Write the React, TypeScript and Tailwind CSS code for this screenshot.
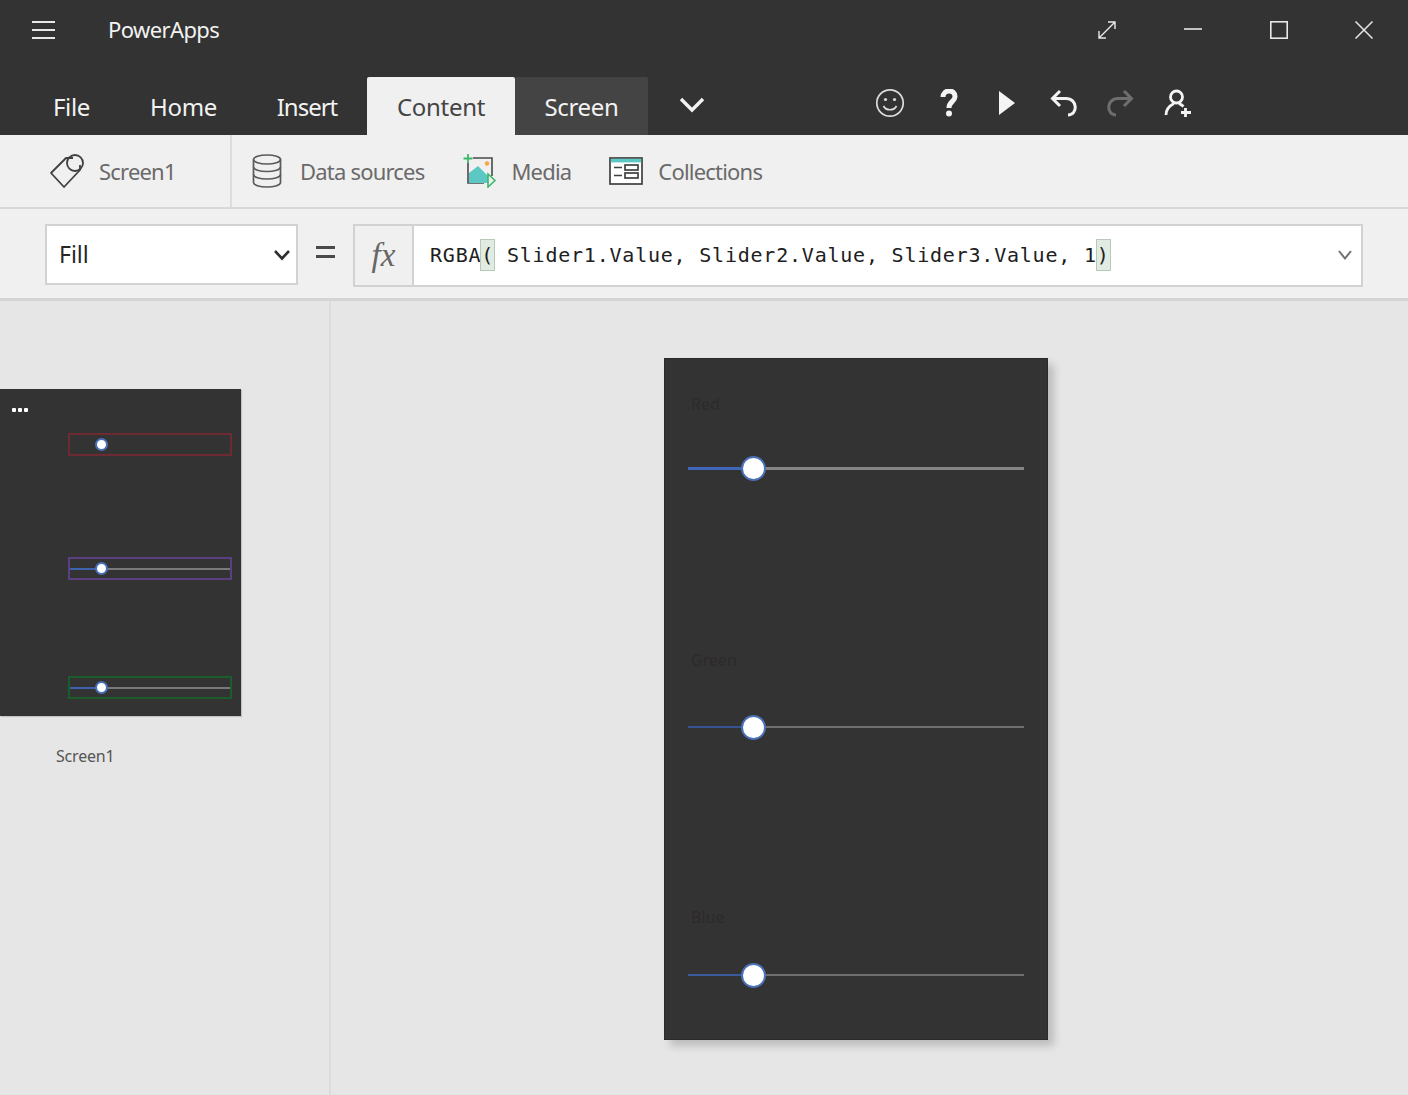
import React from 'react';

const uiFont = 'font-["Noto_Sans","Open_Sans",sans-serif]';

const tabs = [
  { label: 'File', width: 'w-[97px]', style: 'text-[#f2f2f2] tracking-[-0.3px]' },
  { label: 'Home', width: 'w-[127px]', style: 'text-[#f2f2f2] tracking-[-0.3px]' },
  { label: 'Insert', width: 'w-[120px]', style: 'text-[#f2f2f2] tracking-[-1px]' },
  { label: 'Content', width: 'w-[148px]', style: 'bg-[#f0f0f0] text-[#444444] rounded-t-[2px] tracking-[-0.3px]' },
  { label: 'Screen', width: 'w-[133px]', style: 'bg-[#444444] text-[#f2f2f2] rounded-t-[2px] tracking-[-0.3px]' },
];

function WindowControls() {
  return (
    <div className="ml-auto flex items-center text-[#e8e8e8]">
      <svg width="20" height="20" viewBox="0 0 20 20" fill="none" stroke="currentColor" strokeWidth="1.4" className="mr-[66px]">
        <path d="M2 18 L18 2 M11 2 H18 V9 M2 11 V18 H9" />
      </svg>
      <svg width="20" height="20" viewBox="0 0 20 20" fill="none" stroke="currentColor" strokeWidth="1.6" className="mr-[66px]">
        <path d="M1 9 H19" />
      </svg>
      <svg width="20" height="20" viewBox="0 0 20 20" fill="none" stroke="currentColor" strokeWidth="1.6" className="mr-[65px]">
        <rect x="1.8" y="1.8" width="16.4" height="16.4" />
      </svg>
      <svg width="20" height="20" viewBox="0 0 20 20" fill="none" stroke="currentColor" strokeWidth="1.5" className="mr-[34px]">
        <path d="M1.5 1.5 L18.5 18.5 M18.5 1.5 L1.5 18.5" />
      </svg>
    </div>
  );
}

function ActionIcons() {
  return (
    <div className="ml-[170px] flex items-center mt-[-6px] text-[#f4f4f4]">
      <svg width="30" height="30" viewBox="0 0 30 30" fill="none" stroke="currentColor" strokeWidth="1.7" className="text-[#dddddd]">
        <circle cx="15" cy="15" r="13.2" />
        <circle cx="10.5" cy="11.5" r="1.6" fill="currentColor" stroke="none" />
        <circle cx="19.5" cy="11.5" r="1.6" fill="currentColor" stroke="none" />
        <path d="M8.5 18 C11 23 19 23 21.5 18" />
      </svg>
      <svg width="18" height="28" viewBox="0 0 18 28" fill="none" stroke="currentColor" strokeWidth="5" className="ml-[35px]">
        <path d="M3 8 C3 0 15 0 15 7.5 C15 12.5 9 12.5 9 19" />
        <circle cx="9" cy="24.5" r="3" fill="currentColor" stroke="none" />
      </svg>
      <svg width="18" height="26" viewBox="0 0 18 26" fill="currentColor" className="ml-[40px]">
        <path d="M1 1 L17 13 L1 25 Z" />
      </svg>
      <svg width="28" height="28" viewBox="0 0 28 28" fill="none" stroke="currentColor" strokeWidth="3" className="ml-[34px]">
        <path d="M10 2 L2.5 9.5 L10 17 M3 9.5 H16 C28 9.5 28 26 18 26" />
      </svg>
      <svg width="28" height="28" viewBox="0 0 28 28" fill="none" stroke="currentColor" strokeWidth="3" className="ml-[28px] text-[#6e6e6e]">
        <path d="M18 2 L25.5 9.5 L18 17 M25 9.5 H12 C0 9.5 0 26 10 26" />
      </svg>
      <svg width="28" height="28" viewBox="0 0 28 28" fill="none" stroke="currentColor" strokeWidth="2.8" className="ml-[30px]">
        <circle cx="12.5" cy="8" r="6" />
        <path d="M2 26 C2 19 7 16 10 14.5 M15 14.5 C17 15.5 18.5 16.5 19.5 17.5 M21.5 19 V28 M17 23.5 H27" />
      </svg>
    </div>
  );
}

function TagIcon() {
  return (
    <svg width="36" height="36" viewBox="0 0 36 36" fill="none" stroke="#404040" strokeWidth="1.8">
      <path d="M24 5 H17 L2 20 L15 34 L31 17 V12" strokeLinejoin="round" />
      <circle cx="26" cy="10" r="8" />
    </svg>
  );
}

function DatabaseIcon() {
  return (
    <svg width="30" height="34" viewBox="0 0 30 34" fill="none" stroke="#5a5a5a" strokeWidth="1.7">
      <ellipse cx="15" cy="5.5" rx="13.5" ry="4.5" />
      <path d="M1.5 5.5 V28.5 C1.5 31 7.5 33 15 33 C22.5 33 28.5 31 28.5 28.5 V5.5" />
      <path d="M1.5 13 C1.5 15.5 7.5 17.5 15 17.5 C22.5 17.5 28.5 15.5 28.5 13" />
      <path d="M1.5 20.5 C1.5 23 7.5 25 15 25 C22.5 25 28.5 23 28.5 20.5" />
    </svg>
  );
}

function MediaIcon() {
  return (
    <svg width="34" height="34" viewBox="0 0 34 34" fill="none">
      <path d="M10 4 H29 V22 M5 9 V29 H21" stroke="#4a4a4a" strokeWidth="1.6" />
      <path d="M6 29 V19 L15 12 L25 22 V29 Z" fill="#5cc8c4" />
      <circle cx="24" cy="9.5" r="2.2" fill="#f4a742" />
      <path d="M5 0 V9 M0.5 4.5 H9.5" stroke="#3db86b" strokeWidth="1.8" />
      <path d="M25 20 L32 26.5 L25 33 Z" fill="#f0f0f0" stroke="#3db86b" strokeWidth="1.6" />
    </svg>
  );
}

function CollectionsIcon() {
  return (
    <svg width="34" height="28" viewBox="0 0 34 28" fill="none" stroke="#404040" strokeWidth="1.7">
      <rect x="1" y="1" width="32" height="26" fill="#ffffff" />
      <rect x="1.8" y="1.8" width="30.4" height="3.6" fill="#5cc8c4" stroke="none" />
      <path d="M5 10.5 H13 M5 18.5 H13" />
      <rect x="16" y="8" width="13" height="5" />
      <rect x="16" y="16" width="13" height="5" />
    </svg>
  );
}

function ToolbarItem({ icon, label, iconGap, className }: { icon: React.ReactNode; label: string; iconGap: string; className: string }) {
  return (
    <div className={`flex items-center ${className}`}>
      {icon}
      <span className={`text-[22px] tracking-[-0.8px] text-[#6a6a6a] ${iconGap}`}>{label}</span>
    </div>
  );
}

function MiniSlider({ border, line, className }: { border: string; line: boolean; className: string }) {
  return (
    <div className={`relative ml-[68px] flex h-[23px] w-[164px] items-center border-2 ${border} ${className}`}>
      {line && (
        <div className="flex w-full">
          <div className="h-[2px] w-[31px] bg-[#3f62ad]" />
          <div className="h-[2px] flex-1 bg-[#7a7a7a]" />
        </div>
      )}
      <div className="absolute left-[25px] top-[3px] h-[13px] w-[13px] rounded-full border-2 border-[#4a70b8] bg-white" />
    </div>
  );
}

function Slider({ track, fill, height, className }: { track: string; fill: string; height: string; className: string }) {
  return (
    <div className={`relative flex h-[24px] w-[336px] items-center ${className}`}>
      <div className={`${height} w-[60px] ${fill}`} />
      <div className={`${height} flex-1 ${track}`} />
      <div className="absolute left-[53px] top-0 h-[25px] w-[25px] rounded-full border-2 border-[#4a70b8] bg-white" />
    </div>
  );
}

export default function App() {
  return (
    <div className={`flex h-[1095px] w-[1408px] flex-col overflow-hidden bg-[#e6e6e6] ${uiFont}`}>
      <header className="h-[135px] shrink-0 bg-[#333333]">
        <div className="flex h-[77px] items-center pb-[18px]">
          <div className="ml-[32px] flex w-[23px] flex-col gap-[6px]">
            <div className="h-[2px] bg-[#e8e8e8]" />
            <div className="h-[2px] bg-[#e8e8e8]" />
            <div className="h-[2px] bg-[#e8e8e8]" />
          </div>
          <span className="ml-[53px] text-[22px] tracking-[-0.6px] text-[#f2f2f2]">PowerApps</span>
          <WindowControls />
        </div>
        <div className="flex h-[58px] items-stretch pl-[23px]">
          {tabs.map((tab) => (
            <div key={tab.label} className={`flex items-center justify-center pt-[2px] text-[24px] ${tab.width} ${tab.style}`}>
              {tab.label}
            </div>
          ))}
          <svg width="26" height="16" viewBox="0 0 26 16" fill="none" stroke="#f2f2f2" strokeWidth="3.4" className="ml-[31px] mt-[20px]">
            <path d="M2 2 L13 13 L24 2" />
          </svg>
          <ActionIcons />
        </div>
      </header>

      <div className="flex h-[74px] shrink-0 items-center border-b-2 border-[#d8d8d8] bg-[#f0f0f0]">
        <div className="flex h-full w-[232px] items-center border-r-2 border-[#dcdcdc] pl-[49px]">
          <TagIcon />
          <span className="ml-[14px] text-[22px] tracking-[-0.8px] text-[#6a6a6a]">Screen1</span>
        </div>
        <ToolbarItem icon={<DatabaseIcon />} label="Data sources" iconGap="ml-[18px]" className="ml-[20px]" />
        <ToolbarItem icon={<MediaIcon />} label="Media" iconGap="ml-[14px]" className="ml-[39px]" />
        <ToolbarItem icon={<CollectionsIcon />} label="Collections" iconGap="ml-[15px]" className="ml-[38px]" />
      </div>

      <div className="flex h-[92px] shrink-0 items-start border-b-[3px] border-[#d4d4d4] bg-[#f0f0f0] pt-[15px]">
        <div className="ml-[45px] flex h-[61px] w-[253px] items-center justify-between border-2 border-[#d2d2d2] bg-white pl-[12px] pr-[5px]">
          <span className="text-[23px] text-[#262626]">Fill</span>
          <svg width="18" height="12" viewBox="0 0 18 12" fill="none" stroke="#303030" strokeWidth="2.6">
            <path d="M2 2 L9 9.5 L16 2" />
          </svg>
        </div>
        <div className="ml-[18px] mt-[22px] flex w-[19px] flex-col gap-[6px]">
          <div className="h-[3px] bg-[#4a4a4a]" />
          <div className="h-[3px] bg-[#4a4a4a]" />
        </div>
        <div className="ml-[18px] flex h-[63px] w-[1010px] border-2 border-[#d2d2d2] bg-white">
          <div className="flex w-[59px] items-center justify-center border-r-2 border-[#d2d2d2] bg-[#f0f0f0] font-['Liberation_Serif',serif] text-[33px] italic text-[#666666]">
            <span>fx</span>
          </div>
          <div className="flex flex-1 items-center pb-[2px] pl-[16px] pr-[8px] font-['DejaVu_Sans_Mono',monospace] text-[20px] tracking-[0.78px] text-[#202020]">
            <span>RGBA</span>
            <span className="bg-[#e1ebe1] outline outline-[#b9c9b9]">(</span>
            <span className="whitespace-pre"> Slider1.Value, Slider2.Value, Slider3.Value, 1</span>
            <span className="bg-[#e1ebe1] outline outline-[#b9c9b9]">)</span>
            <svg width="16" height="12" viewBox="0 0 16 12" fill="none" stroke="#707070" strokeWidth="2" className="ml-auto">
              <path d="M2 2 L8 9.5 L14 2" />
            </svg>
          </div>
        </div>
      </div>

      <main className="flex min-h-0 flex-1">
        <aside className="w-[331px] shrink-0 border-r-2 border-[#dcdcdc] pt-[88px]">
          <div className="relative h-[327px] w-[241px] bg-[#333333] pt-[44px] shadow-[1px_1px_1px_rgba(0,0,0,0.15)]">
            <div className="absolute left-[12px] top-[19px] flex gap-[2px]">
              <div className="h-[4px] w-[4px] rounded-[1px] bg-white" />
              <div className="h-[4px] w-[4px] rounded-[1px] bg-white" />
              <div className="h-[4px] w-[4px] rounded-[1px] bg-white" />
            </div>
            <MiniSlider border="border-[#6e2a33]" line={false} className="" />
            <MiniSlider border="border-[#5c3f80]" line className="mt-[101px]" />
            <MiniSlider border="border-[#1a5c2a]" line className="mt-[96px]" />
          </div>
          <p className="ml-[56px] mt-[28px] text-[16px] tracking-[-0.2px] text-[#555555]">Screen1</p>
        </aside>

        <section className="flex-1 pl-[333px] pt-[57px]">
          <div className="h-[682px] w-[384px] border border-[#2a2a2a] bg-[#333333] pl-[23px] pt-[33px] text-[16px] text-[#2d2a2a] shadow-[6px_6px_8px_rgba(0,0,0,0.18)]">
            <p className="ml-[3px] h-[22px]">Red</p>
            <Slider track="bg-[#858585]" fill="bg-[#3f66b8]" height="h-[3px]" className="mt-[42px]" />
            <p className="ml-[3px] mt-[168px] h-[22px]">Green</p>
            <Slider track="bg-[#6f6f6f]" fill="bg-[#345390]" height="h-[2px]" className="mt-[45px]" />
            <p className="ml-[3px] mt-[166px] h-[22px]">Blue</p>
            <Slider track="bg-[#6f6f6f]" fill="bg-[#3a5a9c]" height="h-[2px]" className="mt-[36px]" />
          </div>
        </section>
      </main>
    </div>
  );
}
